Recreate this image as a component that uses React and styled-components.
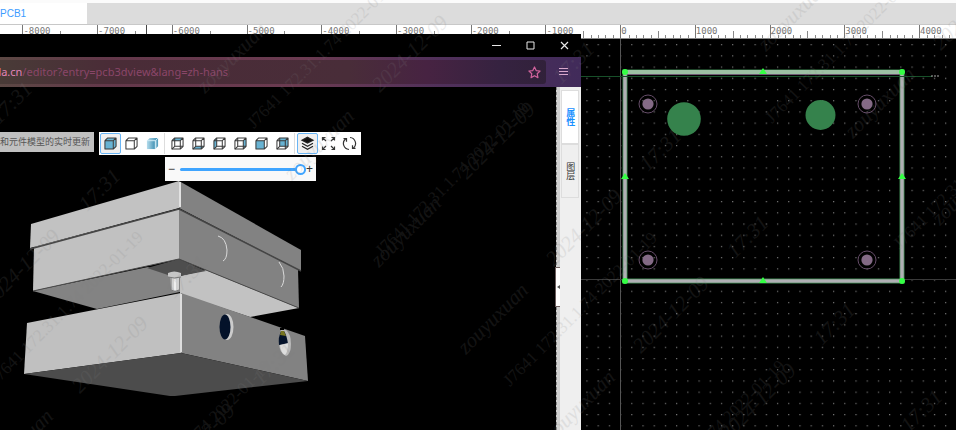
import React, { useState } from "react";
import styled, { createGlobalStyle } from "styled-components";

const GlobalStyle = createGlobalStyle`
  * {
    box-sizing: border-box;
  }
  body {
    margin: 0;
    background: #000;
    font-family: "Liberation Sans", "Noto Sans CJK SC", sans-serif;
  }
  button {
    padding: 0;
    border: 0;
    background: none;
    font: inherit;
    color: inherit;
    cursor: pointer;
  }
  svg {
    display: block;
  }
`;

const Page = styled.div`
  position: relative;
  display: flex;
  flex-direction: column;
  height: 100vh;
  overflow: hidden;
`;

const TabBar = styled.nav`
  display: flex;
  height: 25px;
  flex: none;
  border-top: 3px solid #fbfbfb;
  border-bottom: 1px solid #c8c8c8;
  background: #dcdcdc;
`;
const FileTab = styled.button`
  width: 87px;
  background: #fff;
  color: #3c9cff;
  font-size: 10px;
  text-align: left;
`;

const RulerBar = styled.div`
  position: relative;
  display: grid;
  grid-template-columns: 224fr repeat(12, 747fr) 370fr;
  flex: none;
  height: 14px;
  overflow: hidden;
  border-bottom: 1px solid #888;
  background: #fff;
`;
const RulerCell = styled.div`
  display: grid;
  grid-template-columns: 100%;
  grid-template-rows: 13px;
  min-width: 0;
  border-left: ${(p) => (p.$blank ? "0" : "1px solid #777")};

  > * {
    grid-area: 1 / 1;
  }
`;
const RulerLabel = styled.span`
  color: #777;
  font-family: "DejaVu Sans Mono", monospace;
  font-size: 9px;
  line-height: 12px;
`;
const Ticks = styled.div`
  display: flex;
  align-items: flex-end;
  min-width: ${(p) => (p.$wide ? "200%" : "100%")};
`;
const Tick = styled.i`
  flex: 1;
  height: ${(p) => (p.$mid ? 7 : 3)}px;
  border-left: 1px solid ${(p) => (p.$none ? "transparent" : "#888")};
`;
const RulerCursor = styled.i`
  position: absolute;
  left: 15.3%;
  top: 0;
  bottom: 0;
  width: 1px;
  background: #444;
`;

const Board = styled.svg`
  flex: 1;
  width: 100%;
  min-height: 0;
  background: #000;
`;

const BrowserWindow = styled.section`
  position: absolute;
  left: 0;
  top: 34px;
  bottom: 0;
  width: 60.8%;
  display: flex;
  flex-direction: column;
  background: #000;
`;
const TitleBar = styled.header`
  display: flex;
  justify-content: flex-end;
  flex: none;
  height: 23px;
  color: #e8e8e8;
`;
const WindowButton = styled.button`
  display: grid;
  place-items: center;
  width: 34px;
`;
const AddressBar = styled.div`
  display: flex;
  flex: none;
  height: 30px;
  padding: 3px 0;
  background: linear-gradient(
    90deg,
    #5c4844 0,
    #63384a 18%,
    #6b3b51 52%,
    #50305a 76%,
    #412b5a 100%
  );
`;
const Address = styled.div`
  display: flex;
  align-items: center;
  flex: 1;
  min-width: 0;
  padding-right: 5px;
  border-radius: 0 3px 3px 0;
  background: linear-gradient(
    90deg,
    #493b37 0,
    #4a2c37 20%,
    #492d39 64%,
    #472342 78%,
    #352240 92%,
    #31213a 100%
  );
`;
const Url = styled.a`
  display: flex;
  justify-content: flex-end;
  width: 228px;
  overflow: hidden;
  color: #8a4669;
  font-family: "Noto Sans", sans-serif;
  font-size: 11px;
  line-height: 16px;
  white-space: nowrap;
  text-decoration: none;

  b {
    color: #e384b8;
    font-weight: 400;
  }
`;
const StarButton = styled.button`
  margin-left: auto;
  color: #d0629c;
`;
const MenuButton = styled.button`
  display: grid;
  place-items: center;
  width: 35px;
  color: #d8a8cc;
`;

const Content = styled.div`
  display: flex;
  flex: 1;
  min-height: 0;
`;
const Viewer = styled.main`
  flex: 1;
  min-width: 0;
  padding-top: 45px;
  overflow: hidden;
`;
const ToolRow = styled.div`
  display: flex;
  align-items: flex-start;
  gap: 5px;
`;
const Notice = styled.p`
  width: 94px;
  height: 20px;
  margin: 0;
  padding-right: 4px;
  background: #c0c0c0;
  color: #555;
  font-family: "Noto Sans CJK SC", sans-serif;
  font-size: 9px;
  line-height: 19px;
  text-align: right;
  white-space: nowrap;
`;
const Toolbar = styled.div`
  display: flex;
  height: 23px;
  padding: 1px;
  background: #fff;
`;
const ToolButton = styled.button`
  display: grid;
  place-items: center;
  width: 21px;
  height: 21px;
  border: 1px solid ${(p) => (p.$active ? "#69b5f5" : "transparent")};
  border-radius: 2px;
  background: ${(p) => (p.$active ? "#f0f0f0" : "none")};
`;
const Divider = styled.i`
  width: 1px;
  margin: 0 2px 0 1px;
  background: #ddd;
`;
const SliderPanel = styled.label`
  display: flex;
  align-items: center;
  width: 151px;
  height: 24px;
  margin: 2px 0 0 165px;
  padding: 0 3px;
  background: #f9f9f9;
  color: #333;
  font-size: 12px;
  line-height: 12px;
`;
const Slider = styled.input`
  flex: 1;
  min-width: 0;
  height: 11px;
  margin: 0;
  appearance: none;
  background: none;

  &::-webkit-slider-runnable-track {
    height: 3px;
    border-radius: 2px;
    background: #40a5ff;
  }
  &::-webkit-slider-thumb {
    width: 11px;
    height: 11px;
    margin-top: -4px;
    appearance: none;
    border: 2px solid #40a5ff;
    border-radius: 50%;
    background: #fff;
  }
`;
const Sign = styled.span`
  flex: none;
  width: ${(p) => (p.$wide ? 12 : 7)}px;
`;
const Model = styled.svg`
  width: 320px;
  height: 217px;
`;

const Splitter = styled.div`
  display: flex;
  align-items: center;
  width: 4px;
  padding-top: 56px;
  border-left: 1px dashed #888;
  background: #d0d0d0;
`;
const SplitterGrip = styled.button`
  display: grid;
  place-items: center;
  width: 4px;
  height: 38px;
  margin-left: -1px;
  outline: 1px solid #6b5d5d;
  background: #fff;
`;
const SidePanel = styled.aside`
  width: 21px;
  padding: 3px 2px 0 1px;
  background: #efefef;
`;
const SideTab = styled.button`
  display: grid;
  place-items: center;
  width: 18px;
  height: 54px;
  border: 1px solid #ddd;
  background: ${(p) => (p.$active ? "#fff" : "#efefef")};
  color: ${(p) => (p.$active ? "#1890ff" : "#333")};
  font-family: "Noto Sans CJK SC", sans-serif;
  font-size: 9px;
  font-weight: ${(p) => (p.$active ? 700 : 400)};
  line-height: 10px;
  writing-mode: vertical-rl;
`;

const Watermark = styled.svg`
  position: absolute;
  left: 0;
  top: 0;
  width: 100%;
  height: 100%;
  pointer-events: none;
  fill: #808080;
  opacity: 0.15;
  font-family: "Liberation Serif", serif;
`;

const labels = [
  -8000, -7000, -6000, -5000, -4000, -3000, -2000, -1000, 0, 1000, 2000, 3000,
  4000,
];

function Ruler() {
  return (
    <RulerBar>
      <RulerCell $blank />
      {labels.map((n) => (
        <RulerCell key={n}>
          <RulerLabel>{n}</RulerLabel>
          <Ticks $wide={n === 4000}>
            {[0, 1, 2, 3, 4, 5, 6, 7, 8, 9].map((i) => (
              <Tick key={i} $mid={i === 5} $none={i === 0} />
            ))}
          </Ticks>
        </RulerCell>
      ))}
      <RulerCursor />
    </RulerBar>
  );
}

const drills = [
  [648, 104],
  [867, 104],
  [648, 260],
  [867, 260],
];
const corners = [
  [625, 72],
  [902, 72],
  [625, 281],
  [902, 281],
];
const middles = [
  [763, 72],
  [763, 281],
  [625, 177],
  [902, 177],
];

function PcbBoard() {
  return (
    <Board viewBox="0 39 956 391" preserveAspectRatio="xMinYMin slice">
      <defs>
        <pattern
          id="dots"
          x="620"
          y="279.5"
          width="11.21"
          height="11.21"
          patternUnits="userSpaceOnUse"
        >
          <rect width="1.2" height="1.2" fill="#777" />
        </pattern>
      </defs>
      <rect y="39" width="956" height="391" fill="url(#dots)" />
      <path d="M620.5 39V430" stroke="#555" />
      <path d="M581 279.5H956" stroke="#3a3a3a" />
      <rect x="625" y="72" width="277" height="209" fill="none" stroke="#3c8650" strokeWidth="5" />
      <rect x="625" y="72" width="277" height="209" fill="none" stroke="#b0afb4" strokeWidth="3.4" />
      <path d="M623 72H904" stroke="#9dc0a4" strokeWidth="4" />
      <path d="M627 74.5H900" stroke="#6f5a74" />
      <path d="M581 76.5H932" stroke="#175029" />
      <path d="M931 76H940" stroke="#aaa" strokeDasharray="2 1" />
      <circle cx="684" cy="119" r="16.8" fill="#35824c" />
      <circle cx="820.5" cy="115" r="15" fill="#35824c" />
      {drills.map(([x, y]) => (
        <g key={`${x}-${y}`}>
          <circle cx={x} cy={y} r="5.6" fill="#846a86" />
          <circle cx={x} cy={y} r="9" fill="none" stroke="#664d69" />
        </g>
      ))}
      {corners.map(([x, y]) => (
        <circle key={`${x}-${y}`} cx={x} cy={y} r="3" fill="#35ff45" />
      ))}
      {middles.map(([x, y]) => (
        <path key={`${x}-${y}`} d={`M${x} ${y - 4}l4 6h-8z`} fill="#35ff45" />
      ))}
    </Board>
  );
}

const cubeFaces = {
  front: "M1 4h9v9H1z",
  top: "M1 4l3-3h9l-3 3z",
  right: "M10 4l3-3v9l-3 3z",
  left: "M1 4l3-3v9l-3 3z",
  bottom: "M1 13l3-3h9l-3 3z",
  back: "M4 1h9v9H4z",
};

function CubeIcon({ faces = [], hollow, plain }) {
  return (
    <svg width="13" height="13" viewBox="0 0 14 14" fill="none" strokeLinejoin="round">
      {plain && (
        <defs>
          <linearGradient id="shade" x2="1">
            <stop offset="0" stopColor="#b5dcec" />
            <stop offset="1" stopColor="#3e8fb3" />
          </linearGradient>
        </defs>
      )}
      {faces.map((f) => (
        <path key={f} d={cubeFaces[f]} fill={plain ? "url(#shade)" : "#68b3d3"} />
      ))}
      {plain ? (
        <path d="M1 4h9l3-3M10 4v9" stroke="#cdeaf5" />
      ) : (
        <g stroke="#3a3a3a" strokeWidth="1.1">
          {!hollow && <path d="M4 1v9h9M4 10l-3 3" />}
          <path d="M1 4h9v9H1zM1 4l3-3h9l-3 3M13 1v9l-3 3" />
        </g>
      )}
    </svg>
  );
}

function LayersIcon() {
  return (
    <svg width="15" height="15" viewBox="0 0 15 15" fill="none" stroke="#222" strokeWidth="1.2">
      <path d="M7.5 1.3L13 4.2 7.5 7.1 2 4.2z" fill="#111" />
      <path d="M2 7.3l5.5 3 5.5-3M2 10.3l5.5 3 5.5-3" />
    </svg>
  );
}

function ExpandIcon() {
  return (
    <svg width="15" height="15" viewBox="0 0 15 15" fill="none" stroke="#333" strokeWidth="1.2">
      <path d="M1.5 4.5v-3h3M1.5 1.5L5 5M10.5 1.5h3v3M13.5 1.5L10 5M1.5 10.5v3h3M1.5 13.5L5 10M10.5 13.5h3v-3M13.5 13.5L10 10" />
    </svg>
  );
}

function RotateIcon() {
  return (
    <svg width="15" height="15" viewBox="0 0 15 15" fill="none" stroke="#333" strokeWidth="1.2">
      <path d="M7 13.5A6 6 0 0 1 3.5 3M1.5 2.7h3v3M8 1.5A6 6 0 0 1 11.5 12M13.5 12.3h-3v-3" />
    </svg>
  );
}

function EnclosureModel() {
  return (
    <Model viewBox="0 181 320 217">
      {/* inside of the lid */}
      <path d="M33 291L148 267 180 276V292L97 309z" fill="#838383" />
      <path d="M180 276L206 270 299 308 250 317 180 294z" fill="#c2c2c2" />
      <path d="M147 268L179 259 206 271 180 276 168 275z" fill="#4e4e4e" />
      {/* lid walls */}
      <path d="M34 247L179 209V259L33 291z" fill="#c1c1c1" />
      <path d="M179 209L298 269 299 308 179 259z" fill="#828282" />
      <path d="M33 291L179 259 299 308" fill="none" stroke="#4b4b4b" />
      <path d="M31 224L179 181V208L30 248z" fill="#c2c2c2" />
      <path d="M179 181L301 250V271L179 208z" fill="#828282" />
      <path d="M30 249L179 209 301 271" fill="none" stroke="#454545" strokeWidth="1.5" />
      <path d="M180 182V207" stroke="#e2e2e2" strokeWidth="2" />
      <path d="M218 236Q226 238 227 250 227 259 223 261" fill="none" stroke="#dadada" />
      <path d="M279 262Q284 268 284 276 284 284 281 287" fill="none" stroke="#dadada" />
      {/* base */}
      <path d="M27 323L181 293V353L24 374z" fill="#c0c0c0" />
      <path d="M181 293L305 336 308 381 181 353z" fill="#828282" />
      <path d="M24 374L181 353 308 381 175 396H170z" fill="#4c4c4c" />
      <path d="M181 294V352" stroke="#dedede" strokeWidth="2" />
      {/* screw post */}
      <path d="M170 276h9v14q-4 3-8 0z" fill="#d0d0d0" />
      <path d="M168 273q6-3 13 0v4q-6 2-13 0z" fill="#c6c6c6" />
      <path d="M168 277q6 2 13 0M171 278v12q4 3 8 0" fill="none" stroke="#777" />
      <path d="M175 279v11" stroke="#eee" strokeWidth="2" />
      {/* side openings */}
      <ellipse cx="227" cy="327" rx="6.5" ry="13" fill="#ccc" />
      <ellipse cx="225" cy="327" rx="5.5" ry="12.5" fill="#04122a" />
      <path d="M281 330h5q5 4 5 14 0 10-5 12-7-3-7-14 0-8 2-12z" fill="#b9b9b9" />
      <path d="M281 331h3q3 5 4 13l-9 1q-1-8 2-14z" fill="#04122a" />
      <path d="M281 331h3l2 5-6-1z" fill="#777522" />
      <path d="M280 345l8-2q0 9-3 12-4-2-5-10z" fill="#ddd" />
      <path d="M280 329h4" stroke="#000" strokeWidth="2" />
    </Model>
  );
}

const marks = [
  {
    text: "zouyuxuan",
    at: [[-9, 481], [205, 94], [292, 181], [379, 268], [466, 355], [553, 442], [766, 52], [853, 139], [940, 226]],
  },
  {
    text: "2024-12-09",
    at: [[-8, 307], [80, 394], [167, 481], [380, 93], [467, 180], [554, 267], [641, 354], [728, 441], [941, 51]],
  },
  {
    text: "17:31",
    at: [[-1, 125], [87, 212], [174, 299], [261, 386], [561, 85], [648, 172], [735, 259], [822, 346], [909, 433]],
  },
  {
    text: "J7641 172.31.1.74 2022-01-19",
    small: true,
    at: [[-4, 386], [124, 515], [254, 129], [382, 257], [510, 387], [638, 515], [772, 124], [900, 250]],
  },
];

function WatermarkLayer() {
  return (
    <Watermark viewBox="0 0 956 430" preserveAspectRatio="xMinYMin slice" aria-hidden="true">
      {marks.map(({ text, small, at }) => (
        <g key={text} fontSize={small ? 17 : 21} fontStyle={small ? "normal" : "italic"}>
          {at.map(([x, y]) => (
            <text key={`${x}-${y}`} transform={`translate(${x} ${y}) rotate(-45)`}>
              {text}
            </text>
          ))}
        </g>
      ))}
    </Watermark>
  );
}

export default function App() {
  const [distance, setDistance] = useState(100);

  return (
    <Page>
      <GlobalStyle />
      <TabBar>
        <FileTab>PCB1</FileTab>
      </TabBar>
      <Ruler />
      <PcbBoard />

      <BrowserWindow>
        <TitleBar>
          <WindowButton aria-label="Minimize">
            <svg width="9" height="9" stroke="currentColor">
              <path d="M0 4.5h9" />
            </svg>
          </WindowButton>
          <WindowButton aria-label="Maximize">
            <svg width="9" height="9" fill="none" stroke="currentColor">
              <path d="M1 1h7v7H1z" />
            </svg>
          </WindowButton>
          <WindowButton aria-label="Close">
            <svg width="9" height="9" stroke="currentColor" strokeWidth="1.2">
              <path d="M1 1l7 7M8 1L1 8" />
            </svg>
          </WindowButton>
        </TitleBar>
        <AddressBar>
          <Address>
            <Url href="#editor">
              <b>da.cn</b>/editor?entry=pcb3dview&amp;lang=zh-hans
            </Url>
            <StarButton aria-label="Bookmark">
              <svg width="13" height="13" viewBox="0 0 14 14" fill="none" stroke="currentColor" strokeWidth="1.3" strokeLinejoin="round">
                <path d="M7 1l1.8 3.9 4.2.5-3.1 2.9.8 4.2L7 10.4l-3.7 2.1.8-4.2L1 5.4l4.2-.5z" />
              </svg>
            </StarButton>
          </Address>
          <MenuButton aria-label="Menu">
            <svg width="9" height="8" stroke="currentColor">
              <path d="M0 .5h9M0 3.5h9M0 6.5h9" />
            </svg>
          </MenuButton>
        </AddressBar>
        <Content>
          <Viewer>
            <ToolRow>
              <Notice>和元件模型的实时更新</Notice>
              <Toolbar>
                <ToolButton $active aria-label="Shaded with edges">
                  <CubeIcon hollow faces={["front", "top", "right"]} />
                </ToolButton>
                <ToolButton aria-label="Outline">
                  <CubeIcon hollow />
                </ToolButton>
                <ToolButton aria-label="Shaded">
                  <CubeIcon plain faces={["front", "top", "right"]} />
                </ToolButton>
                <Divider />
                <ToolButton aria-label="Top view">
                  <CubeIcon faces={["top"]} />
                </ToolButton>
                <ToolButton aria-label="Bottom view">
                  <CubeIcon faces={["bottom"]} />
                </ToolButton>
                <ToolButton aria-label="Left view">
                  <CubeIcon faces={["left"]} />
                </ToolButton>
                <ToolButton aria-label="Right view">
                  <CubeIcon faces={["right"]} />
                </ToolButton>
                <ToolButton aria-label="Front view">
                  <CubeIcon hollow faces={["front"]} />
                </ToolButton>
                <ToolButton aria-label="Back view">
                  <CubeIcon faces={["back"]} />
                </ToolButton>
                <Divider />
                <ToolButton $active aria-label="Layers">
                  <LayersIcon />
                </ToolButton>
                <ToolButton aria-label="Fit to window">
                  <ExpandIcon />
                </ToolButton>
                <ToolButton aria-label="Rotate">
                  <RotateIcon />
                </ToolButton>
              </Toolbar>
            </ToolRow>
            <SliderPanel>
              <Sign $wide>−</Sign>
              <Slider
                type="range"
                aria-label="Explode distance"
                value={distance}
                onChange={(e) => setDistance(e.target.value)}
              />
              <Sign>+</Sign>
            </SliderPanel>
            <EnclosureModel />
          </Viewer>
          <Splitter>
            <SplitterGrip aria-label="Collapse panel">
              <svg width="3" height="4">
                <path d="M3 0v4L0 2z" fill="#555" />
              </svg>
            </SplitterGrip>
          </Splitter>
          <SidePanel>
            <SideTab $active>属性</SideTab>
            <SideTab>图层</SideTab>
          </SidePanel>
        </Content>
      </BrowserWindow>
      <WatermarkLayer />
    </Page>
  );
}
